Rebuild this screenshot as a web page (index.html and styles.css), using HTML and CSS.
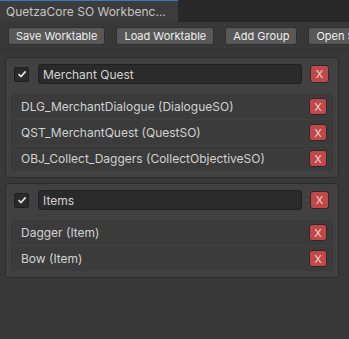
FILE: index.html
```html
<!DOCTYPE html>
<html lang="en">
<head>
  <meta charset="UTF-8" />
  <title>QuetzaCore SO Workbench</title>
  <link rel="stylesheet" href="styles.css">
</head>
<body>

<div class="tabbar">
  <div class="tab">QuetzaCore SO Workbenc...</div>
</div>

<div class="toolbar">
  <button class="tool-btn">Save Worktable</button>
  <button class="tool-btn">Load Worktable</button>
  <button class="tool-btn">Add Group</button>
  <button class="tool-btn">Open SO Folder</button>
</div>

<div class="content">

  <!-- Group: Merchant Quest -->
  <div class="group">
    <div class="group-header">
      <span class="check">
        <svg width="10" height="10" viewBox="0 0 10 10"><path d="M1.5 5.2 L4 7.5 L8.6 2.4" fill="none" stroke="#e6e6e6" stroke-width="1.6"/></svg>
      </span>
      <input class="group-name" type="text" value="Merchant Quest">
      <button class="del-btn">X</button>
    </div>
    <div class="rows">
      <div class="row"><span>DLG_MerchantDialogue (DialogueSO)</span><button class="del-btn small">X</button></div>
      <div class="row"><span>QST_MerchantQuest (QuestSO)</span><button class="del-btn small">X</button></div>
      <div class="row"><span>OBJ_Collect_Daggers (CollectObjectiveSO)</span><button class="del-btn small">X</button></div>
    </div>
  </div>

  <!-- Group: Items -->
  <div class="group">
    <div class="group-header">
      <span class="check">
        <svg width="10" height="10" viewBox="0 0 10 10"><path d="M1.5 5.2 L4 7.5 L8.6 2.4" fill="none" stroke="#e6e6e6" stroke-width="1.6"/></svg>
      </span>
      <input class="group-name" type="text" value="Items">
      <button class="del-btn">X</button>
    </div>
    <div class="rows">
      <div class="row"><span>Dagger (Item)</span><button class="del-btn small">X</button></div>
      <div class="row"><span>Bow (Item)</span><button class="del-btn small">X</button></div>
    </div>
  </div>

</div>

</body>
</html>
```

FILE: styles.css
```css
body {
  margin: 0;
  height: 339px;
  overflow: hidden;
  background-color: #383838;
  font-family: Inter, "Noto Sans", sans-serif;
  font-size: 12px;
  color: #d2d2d2;
}

.tabbar {
  height: 22px;
  background-color: #282828;
  display: flex;
}

.tab {
  width: 172px;
  padding-left: 6px;
  background-color: #3c3c3c;
  border-top: 1px solid #3a79bb;
  color: #c4c4c4;
  line-height: 21px;
  white-space: nowrap;
}

.toolbar {
  display: flex;
  align-items: center;
  gap: 11px;
  height: 28px;
  box-sizing: border-box;
  padding: 0 8px;
  border-bottom: 1px solid #303030;
  white-space: nowrap;
}

.tool-btn {
  flex-shrink: 0;
  height: 18px;
  margin: 0;
  padding: 0 7px;
  background-color: #585858;
  border: 1px solid #303030;
  border-radius: 3px;
  color: #eeeeee;
  font-family: inherit;
  font-size: 11px;
  line-height: 16px;
}

.content {
  display: flex;
  flex-direction: column;
  gap: 5px;
  padding: 7px 10px 0 5px;
}

.group {
  background-color: #414141;
  border: 1px solid #2c2c2c;
  border-radius: 4px;
  padding-bottom: 6px;
}

.group-header {
  display: flex;
  align-items: center;
  padding: 6px 9px 10px 8px;
}

.check {
  width: 13px;
  height: 13px;
  flex-shrink: 0;
  display: flex;
  align-items: center;
  justify-content: center;
  background-color: #2a2a2a;
  border: 1px solid #1f1f1f;
  border-radius: 2px;
  margin-right: 9px;
}

.group-name {
  flex: 1;
  min-width: 0;
  height: 20px;
  box-sizing: border-box;
  margin: 0 8px 0 0;
  padding: 0 4px;
  background-color: #2a2a2a;
  border: 1px solid #212121;
  border-radius: 3px;
  color: #d2d2d2;
  font-family: inherit;
  font-size: 12px;
}

.del-btn {
  width: 19px;
  height: 18px;
  margin: 0;
  padding: 0;
  flex-shrink: 0;
  background-color: #c04848;
  border: 1px solid #2a2a2a;
  border-radius: 3px;
  color: #f0d8d8;
  font-family: inherit;
  font-size: 11px;
  line-height: 16px;
}

.del-btn.small {
  width: 18px;
  height: 17px;
}

.rows {
  display: flex;
  flex-direction: column;
  gap: 1px;
  margin: 0 5px;
}

.row {
  display: flex;
  align-items: center;
  justify-content: space-between;
  height: 25px;
  padding: 0 6px 0 10px;
  background-color: #3b3b3b;
  white-space: nowrap;
}
```
